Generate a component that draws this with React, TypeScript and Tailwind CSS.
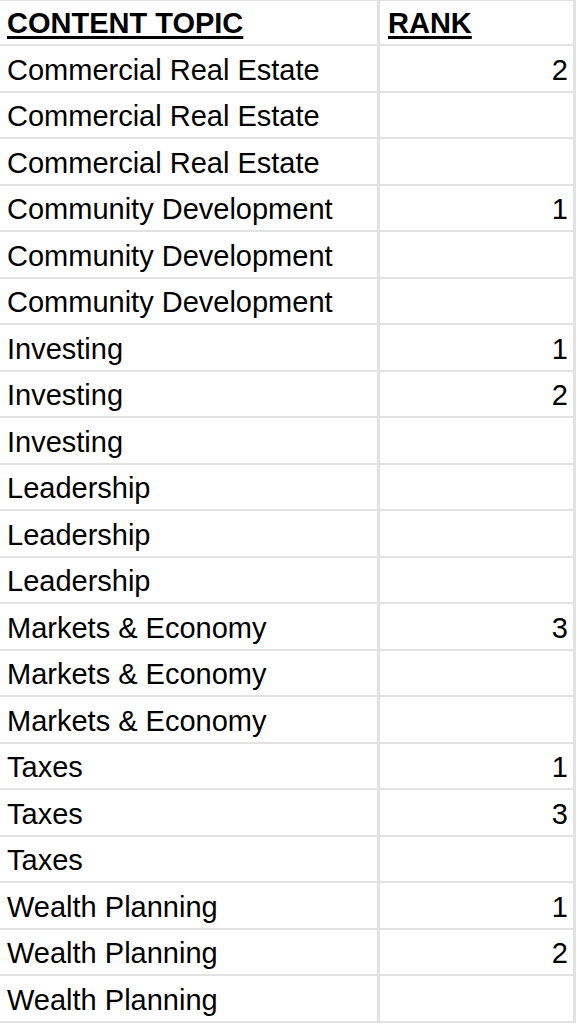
const rows: [string, string][] = [
  ["Commercial Real Estate", "2"],
  ["Commercial Real Estate", ""],
  ["Commercial Real Estate", ""],
  ["Community Development", "1"],
  ["Community Development", ""],
  ["Community Development", ""],
  ["Investing", "1"],
  ["Investing", "2"],
  ["Investing", ""],
  ["Leadership", ""],
  ["Leadership", ""],
  ["Leadership", ""],
  ["Markets & Economy", "3"],
  ["Markets & Economy", ""],
  ["Markets & Economy", ""],
  ["Taxes", "1"],
  ["Taxes", "3"],
  ["Taxes", ""],
  ["Wealth Planning", "1"],
  ["Wealth Planning", "2"],
  ["Wealth Planning", ""],
]

export default function App() {
  return (
    <div
      className="w-[577px] h-[1024px] overflow-hidden bg-white text-black"
      style={{ fontFamily: '"Liberation Sans", Arial, sans-serif' }}
    >
      <div className="w-[576px] border-t border-r-[3px] border-[#e2e2e2]">
        {/* Header */}
        <div className="flex h-[45px] border-b-2 border-[#e2e2e2] text-[29px] font-bold leading-none">
          <div className="w-[380px] shrink-0 border-r-[3px] border-[#e2e2e2] px-[7px] flex items-end pb-[6px]">
            <span className="underline underline-offset-[3px] decoration-[2.5px]">CONTENT TOPIC</span>
          </div>
          <div className="flex-1 px-[8px] flex items-end pb-[6px]">
            <span className="underline underline-offset-[3px] decoration-[2.5px]">RANK</span>
          </div>
        </div>

        {/* Rows */}
        {rows.map(([topic, rank], i) => (
          <div key={i} className="flex h-[46.5px] border-b-2 border-[#e2e2e2] text-[29px] leading-none">
            <div className="w-[380px] shrink-0 border-r-[3px] border-[#e2e2e2] px-[7px] flex items-end pb-[6px] whitespace-nowrap">
              {topic}
            </div>
            <div className="flex-1 px-[5px] flex items-end justify-end pb-[6px]">{rank}</div>
          </div>
        ))}
      </div>
    </div>
  )
}
